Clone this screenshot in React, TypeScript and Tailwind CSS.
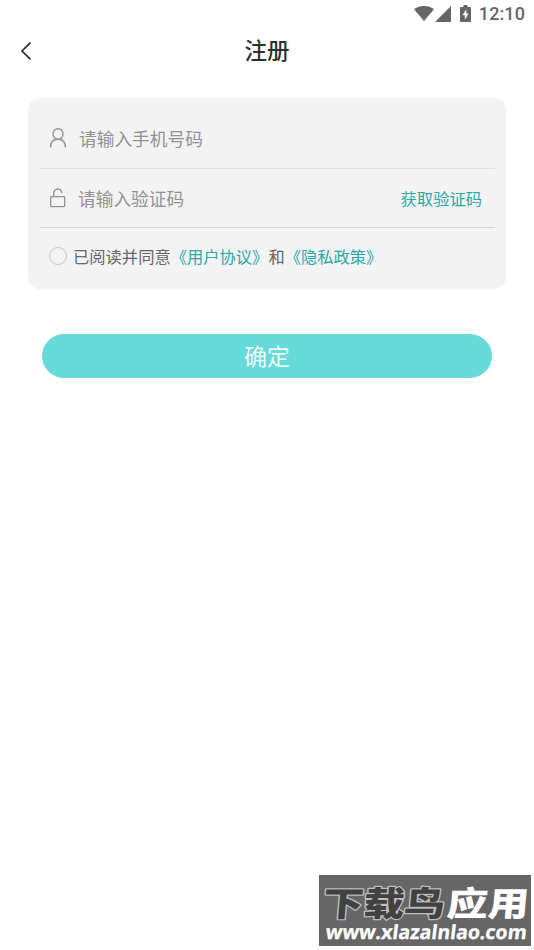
import { useState } from "react";

function StatusBar() {
  return (
    <div className="flex h-7 items-center justify-end pr-[9px] text-[#666666]">
      <svg
        className="-mt-[2px]"
        width="20"
        height="15"
        viewBox="0 0 20 15"
        fill="currentColor"
      >
        <path d="M0 3.2C5.6-1.1 14.4-1.1 20 3.2L10 15Z" />
      </svg>
      <svg
        className="-mt-[1px] ml-[1px]"
        width="16"
        height="16"
        viewBox="0 0 16 16"
        fill="currentColor"
      >
        <path d="M16 0v16H0Z" />
      </svg>
      <svg
        className="-mt-[2px] ml-[9px]"
        width="11"
        height="17"
        viewBox="0 0 11 17"
        fill="currentColor"
      >
        <path d="M3.5 0h4v2H10q1 0 1 1v13q0 1-1 1H1q-1 0-1-1V3q0-1 1-1h2.500Z" />
        <path d="M6.300 4.300 2.500 10.200h2.300v4.500L8.600 8.600H6.300Z" fill="#fff" />
      </svg>
      <span className="ml-2 font-['Roboto',sans-serif] text-[18px] font-medium leading-7 tracking-[0.1px]">
        12:10
      </span>
    </div>
  );
}

function UserIcon() {
  return (
    <svg
      className="shrink-0"
      width="18"
      height="20"
      viewBox="0 0 18 20"
      fill="none"
      stroke="#949494"
      strokeWidth="1.4"
    >
      <ellipse cx="9" cy="6" rx="5" ry="5.300" />
      <path d="M1.500 19.500c0-5 2.600-8.200 7.500-8.200s7.500 3.200 7.500 8.200" />
    </svg>
  );
}

function LockIcon() {
  return (
    <svg
      className="shrink-0"
      width="18"
      height="20"
      viewBox="0 0 18 20"
      fill="none"
      stroke="#949494"
      strokeWidth="1.3"
    >
      <rect x="1.700" y="8.700" width="14" height="10" rx="0.800" />
      <path d="M4.700 8.700V5.400c0-2.400 1.700-4.400 4-4.400 2.200 0 3.700 1.500 4 4" />
    </svg>
  );
}

function Watermark() {
  return (
    <div className="fixed left-[319px] top-[875px] h-[71px] w-[212px] bg-[#666666]">
      <svg width="212" height="71" viewBox="0 0 212 71">
        <g
          transform="translate(3 41) skewX(-5)"
          fontFamily="'Noto Sans CJK SC', sans-serif"
          fontWeight="900"
          fontSize="34"
          strokeLinejoin="round"
          paintOrder="stroke"
        >
          <text
            textLength="122"
            lengthAdjust="spacingAndGlyphs"
            fill="#414141"
            stroke="#bdbdbd"
            strokeWidth="2.500"
          >
            下载鸟
          </text>
          <text
            x="124"
            textLength="82"
            lengthAdjust="spacingAndGlyphs"
            fill="#ffffff"
          >
            应用
          </text>
        </g>
        <text
          transform="translate(6 64) skewX(-7)"
          textLength="201"
          lengthAdjust="spacingAndGlyphs"
          fill="#ffffff"
          stroke="#ffffff"
          strokeWidth="0.300"
          fontFamily="'Open Sans', sans-serif"
          fontWeight="700"
          fontSize="19.500"
        >
          www.xlazalnlao.com
        </text>
      </svg>
    </div>
  );
}

export default function App() {
  const [phone, setPhone] = useState("");
  const [code, setCode] = useState("");
  const [agreed, setAgreed] = useState(false);

  return (
    <main className="min-h-screen bg-white font-['Noto_Sans_CJK_SC',sans-serif]">
      <StatusBar />
      <header className="grid h-[46px] grid-cols-[1fr_auto_1fr] items-center">
        <button type="button" className="pl-5" aria-label="返回">
          <svg
            width="12"
            height="18"
            viewBox="0 0 12 18"
            fill="none"
            stroke="#252525"
            strokeWidth="1.6"
          >
            <path d="M10.500 0.600 2 9l8.500 8.400" />
          </svg>
        </button>
        <h1 className="-mt-[4px] text-[22.500px] font-medium leading-8 text-[#303030]">
          注册
        </h1>
      </header>

      <section className="mx-7 mt-6 h-[191px] rounded-xl bg-[#f3f3f3] pl-3 pr-[11px]">
        <div className="flex h-[71px] items-center border-b border-[#e2e2e2] pl-[9px] pt-[10px]">
          <UserIcon />
          <input
            className="ml-3 min-w-0 flex-1 text-[17.700px] leading-7 outline-none placeholder:text-[#929292]"
            placeholder="请输入手机号码"
            value={phone}
            onChange={(e) => setPhone(e.target.value)}
          />
        </div>
        <div className="flex h-[59px] items-center border-b border-[#d8d8d8] pl-[9px] pr-[13px]">
          <LockIcon />
          <input
            className="ml-[11px] min-w-0 flex-1 text-[17.700px] leading-7 outline-none placeholder:text-[#929292]"
            placeholder="请输入验证码"
            value={code}
            onChange={(e) => setCode(e.target.value)}
          />
          <button
            type="button"
            className="text-[16.300px] leading-7 text-[#2ba9a8]"
          >
            获取验证码
          </button>
        </div>
        <div className="flex h-[56px] items-center pl-[9px] text-[16.300px] leading-7 text-[#666666]">
          <button
            type="button"
            aria-label="同意"
            className={`mr-[6px] size-[18px] rounded-full border ${
              agreed ? "border-[#2ba9a8] bg-[#2ba9a8]" : "border-[#cacaca]"
            }`}
            onClick={() => setAgreed(!agreed)}
          />
          <p className="whitespace-nowrap">
            已阅读并同意
            <span className="text-[#2ba9a8]">《用户协议》</span>和
            <span className="text-[#2ba9a8]">《隐私政策》</span>
          </p>
        </div>
      </section>

      <button
        type="button"
        className="ml-[42px] mt-[45px] block h-11 w-[450px] rounded-full bg-[#66dbd9] text-[22.800px] font-[350] leading-[44px] text-white"
      >
        确定
      </button>
      <Watermark />
    </main>
  );
}
